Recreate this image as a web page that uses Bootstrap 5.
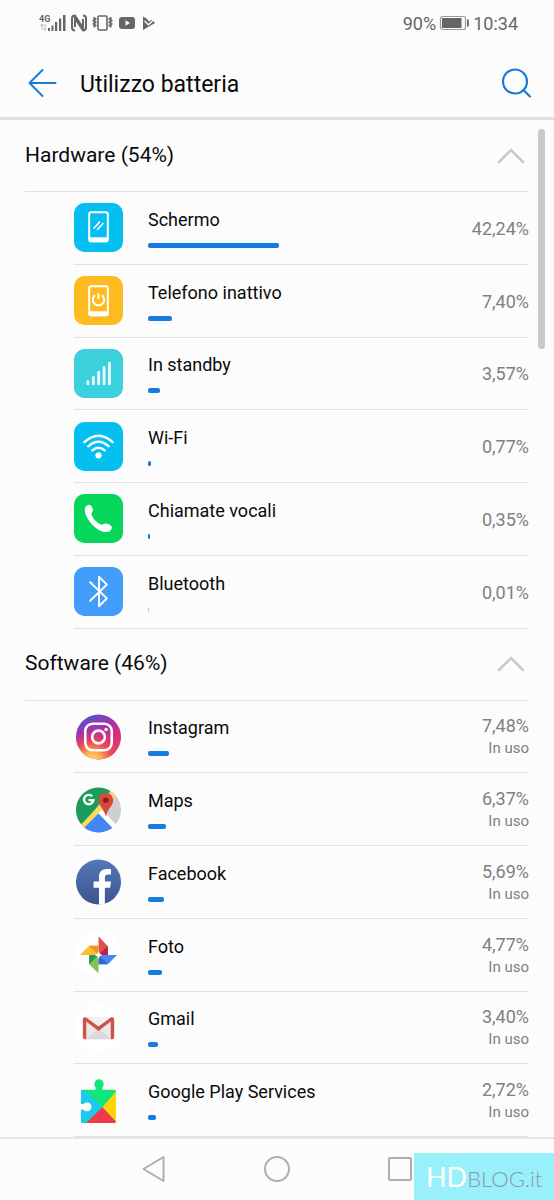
<!DOCTYPE html>
<html lang="it">
<head>
<meta charset="utf-8">
<meta name="viewport" content="width=device-width, initial-scale=1">
<title>Utilizzo batteria</title>
<link href="https://cdn.jsdelivr.net/npm/bootstrap@5.3.0/dist/css/bootstrap.min.css" rel="stylesheet">
<style>
  body { font-family: Roboto, "Liberation Sans", sans-serif; background: #fcfcfc; color: #0a0a0a; }
  svg { display: block; flex: none; }
  button { background: none; border: 0; padding: 0; color: inherit; }
  .screen { min-height: 100vh; }
  .status { height: 46px; padding: 0 36px 0 39px; color: #666; font-size: 18px; }
  .status-power { gap: 3px; }
  .titlebar { height: 74px; padding: 2px 22px 0 26px; border-bottom: 3px solid #dfdfdf; }
  .titlebar h1 { font-size: 23px; line-height: 28px; font-weight: 400; margin-left: 22px; }
  .usage { padding: 0 25px; }
  .group-head { height: 72px; font-size: 21px; border-bottom: 1px solid #e2e2e2; }
  .group-list { margin-left: 49px; }
  .app-row { min-height: 72px; border-bottom: 1px solid #e2e2e2; }
  .app-icon { width: 49px; margin-right: 25px; }
  .app-name { font-size: 18px; line-height: 24px; margin-bottom: 11px; }
  .meter { height: 5px; background: none; border-radius: 0; }
  .meter .progress-bar { background: #147be0; border-radius: 2px; }
  .meter .idle { background: #ccc; }
  .amount { color: #808080; font-size: 18px; line-height: 22px; padding-top: 2px; }
  .amount span { font-size: 15px; }
  .scroll-thumb { right: 9px; top: 9px; width: 7px; height: 220px; border-radius: 4px; background: #c9c9c9; }
  .softkeys { height: 63px; border-top: 2px solid #e6e6e6; padding: 0 142px 2px; }
  .watermark { right: 0; bottom: 0; width: 140px; height: 47px; padding-left: 12px; background: #98f0fb; color: #8b9ba3; font-family: Lato, sans-serif; font-weight: 300; font-size: 22px; line-height: 47px; }
  .watermark b { font-weight: 400; font-size: 27px; color: #fff; }
</style>
</head>
<body>
<div class="screen d-flex flex-column position-relative">
  <div class="status d-flex align-items-center justify-content-between">
    <svg width="118" height="18" viewBox="0 0 118 18" fill="#666" role="img" aria-label="4G, NFC, vibrazione">
      <text x="0" y="8" font-size="9" font-weight="700" font-family="Roboto, sans-serif">4G</text>
      <path d="M3 10v6M1.500 12l1.500-2 1.500 2M6 10v6M4.800 14.500l1.200 2 1.200-2" stroke="#bbb" fill="none"/>
      <path d="M9 14h2v3H9zM12.500 11.500h2V17h-2zM16 8h2.200v9H16zM20 4.500h2.200V17H20zM24 1h2.500v16H24z"/>
      <g fill="none" stroke="#666" stroke-width="2"><path d="M36 16.500q-3 0-3-3v-9q0-3 3-3l8 12.500V5M44 1.500q3 0 3 3v9q0 3-3 3L36 4.500V13"/></g>
      <rect x="59" y="2" width="9" height="14" rx="1" fill="none" stroke="#666" stroke-width="1.600"/>
      <path d="M54.500 3.500l2 1.600-2 1.600 2 1.600-2 1.600 2 1.600-2 1.600M72.500 3.500l-2 1.600 2 1.600-2 1.600 2 1.600-2 1.600 2 1.600" fill="none" stroke="#666" stroke-width="1.900"/>
      <rect x="80" y="3" width="16" height="12" rx="3"/><path d="M86.500 6.200v5.600l4.500-2.800z" fill="#fcfcfc"/>
      <path d="M104 2.500l3.500 2 2.500 3 3-1.800 3 3.300-12 7z"/><path d="M105.500 7l4 3.800 6-5.800" fill="none" stroke="#fcfcfc" stroke-width="1.300"/>
    </svg>
    <div class="status-power d-flex align-items-center">
      <span>90%</span>
      <svg width="31" height="16" viewBox="0 0 31 16"><rect x="1.500" y="1.500" width="25" height="13" rx="2" fill="none" stroke="#999" stroke-width="1.200"/><path d="M3 3h19.500v10H3zM28 4.500h1.800v7H28z" fill="#666"/></svg>
      <span>10:34</span>
    </div>
  </div>

  <header class="titlebar d-flex align-items-center">
    <button type="button" aria-label="Indietro"><svg width="32" height="32" viewBox="0 0 32 32" fill="none" stroke="#197bd8" stroke-width="2" stroke-linecap="round" stroke-linejoin="round"><path d="M29.500 16H3.500M16.500 3L3.500 16l13 13"/></svg></button>
    <h1 class="mb-0 pt-1 flex-fill">Utilizzo batteria</h1>
    <button type="button" aria-label="Cerca"><svg width="32" height="32" viewBox="0 0 32 32" fill="none" stroke="#197bd8" stroke-width="2.200" stroke-linecap="round"><circle cx="15" cy="14.500" r="12"/><path d="M23.500 23l6.500 6.500"/></svg></button>
  </header>

  <main class="usage d-flex flex-column flex-fill position-relative">
    <section class="d-flex flex-column flex-fill">
      <button type="button" class="group-head d-flex align-items-center justify-content-between" aria-expanded="true">
        <span>Hardware (54%)</span>
        <svg width="36" height="20" viewBox="0 0 36 20" fill="none" stroke="#c9c9c9" stroke-width="2.600" stroke-linecap="round"><path d="M6 16L18 4 30 16"/></svg>
      </button>
      <ul class="group-list list-unstyled mb-0 d-flex flex-column flex-fill">
        <li class="app-row d-flex flex-fill align-items-center">
          <svg class="app-icon" height="49" viewBox="0 0 50 50"><rect width="50" height="50" rx="11" fill="#05bff0"/><rect x="15.500" y="9.500" width="19" height="29.500" rx="2" fill="none" stroke="#fff" stroke-width="2"/><path d="M15 35h20v3.500q0 1.500-1.500 1.500h-17q-1.500 0-1.500-1.500z" fill="#fff"/><path d="M20 26l6.500-7M23.500 27.500l6.500-7" stroke="#fff" stroke-width="1.600"/></svg>
          <div class="flex-fill"><div class="app-name">Schermo</div><div class="meter progress"><div class="progress-bar" style="width:131px"></div></div></div>
          <div class="amount text-end">42,24%</div>
        </li>
        <li class="app-row d-flex flex-fill align-items-center">
          <svg class="app-icon" height="49" viewBox="0 0 50 50"><rect width="50" height="50" rx="11" fill="#fdbb1f"/><rect x="15.500" y="10.500" width="19" height="29.500" rx="2" fill="none" stroke="#fff" stroke-width="2"/><path d="M15 36h20v3.500q0 1.500-1.500 1.500h-17q-1.500 0-1.500-1.500z" fill="#fff"/><path d="M21.500 19.500a5.800 5.800 0 1 0 7 0M25 17.500v6" fill="none" stroke="#fff" stroke-width="2"/></svg>
          <div class="flex-fill"><div class="app-name">Telefono inattivo</div><div class="meter progress"><div class="progress-bar" style="width:24px"></div></div></div>
          <div class="amount text-end">7,40%</div>
        </li>
        <li class="app-row d-flex flex-fill align-items-center">
          <svg class="app-icon" height="49" viewBox="0 0 50 50"><rect width="50" height="50" rx="11" fill="#3bd0dc"/><path d="M14.200 33.500v2M19.700 29v6.500M25.200 24v11.500M30.700 19v16.500M36.200 14.500v21" stroke="#e8ffff" stroke-width="3" stroke-linecap="round"/></svg>
          <div class="flex-fill"><div class="app-name">In standby</div><div class="meter progress"><div class="progress-bar" style="width:12px"></div></div></div>
          <div class="amount text-end">3,57%</div>
        </li>
        <li class="app-row d-flex flex-fill align-items-center">
          <svg class="app-icon" height="49" viewBox="0 0 50 50"><rect width="50" height="50" rx="11" fill="#05bff0"/><g fill="none" stroke="#fff" stroke-width="2.400" stroke-linecap="round"><path d="M10.500 20.500q14.500-13 29 0M14.500 24.800q10.500-9.500 21 0M18.700 29q6.300-5.500 12.600 0"/></g><circle cx="25" cy="34" r="3.200" fill="#fff"/></svg>
          <div class="flex-fill"><div class="app-name">Wi-Fi</div><div class="meter progress"><div class="progress-bar" style="width:3px"></div></div></div>
          <div class="amount text-end">0,77%</div>
        </li>
        <li class="app-row d-flex flex-fill align-items-center">
          <svg class="app-icon" height="49" viewBox="0 0 50 50"><rect width="50" height="50" rx="11" fill="#06d65a"/><path d="M11.500 13.500c1-1.800 3.500-3 5-2.300 1.800 1 3 4 2.800 6-.2 1.500-1.700 2-1.400 3.400.8 4.200 6 9.200 10.100 10.600 1.500.5 2.300-1 3.800-1 2.500 0 6.200 1.500 6.800 3.400.4 1.600-1.200 4.300-3.400 5-3 .9-8-.4-12.500-3.700-4-3-8.200-8-10.200-12.500-1.500-3.500-2-7-1-8.900z" fill="#fff"/></svg>
          <div class="flex-fill"><div class="app-name">Chiamate vocali</div><div class="meter progress"><div class="progress-bar" style="width:2px"></div></div></div>
          <div class="amount text-end">0,35%</div>
        </li>
        <li class="app-row d-flex flex-fill align-items-center">
          <svg class="app-icon" height="49" viewBox="0 0 50 50"><rect width="50" height="50" rx="11" fill="#419cfb"/><path d="M16.500 15.500L33.500 32l-8 8V10l8 8-17 16.500" fill="none" stroke="#fff" stroke-width="2" stroke-linecap="round" stroke-linejoin="round"/></svg>
          <div class="flex-fill"><div class="app-name">Bluetooth</div><div class="meter progress"><div class="progress-bar idle" style="width:1px"></div></div></div>
          <div class="amount text-end">0,01%</div>
        </li>
      </ul>
    </section>

    <section class="d-flex flex-column flex-fill">
      <button type="button" class="group-head d-flex align-items-center justify-content-between" aria-expanded="true">
        <span>Software (46%)</span>
        <svg width="36" height="20" viewBox="0 0 36 20" fill="none" stroke="#c9c9c9" stroke-width="2.600" stroke-linecap="round"><path d="M6 16L18 4 30 16"/></svg>
      </button>
      <ul class="group-list list-unstyled mb-0 d-flex flex-column flex-fill">
        <li class="app-row d-flex flex-fill align-items-center">
          <svg class="app-icon" height="49" viewBox="0 0 50 50"><defs><linearGradient id="igBase" x1=".2" y1="0" x2=".7" y2="1"><stop offset="0" stop-color="#4a57cf"/><stop offset=".35" stop-color="#a432ad"/><stop offset=".65" stop-color="#d92e7f"/><stop offset="1" stop-color="#e8455a"/></linearGradient><radialGradient id="igWarm" cx=".35" cy="1.050" r=".75"><stop offset="0" stop-color="#ffe08a"/><stop offset=".3" stop-color="#fbac4c"/><stop offset=".6" stop-color="#ee5048" stop-opacity=".8"/><stop offset="1" stop-color="#d92e7f" stop-opacity="0"/></radialGradient></defs><circle cx="25" cy="25.500" r="23" fill="url(#igBase)"/><circle cx="25" cy="25.500" r="23" fill="url(#igWarm)"/><rect x="11.500" y="12" width="27" height="27" rx="7.500" fill="none" stroke="#fff" stroke-width="2.600"/><circle cx="25" cy="25.500" r="6.500" fill="none" stroke="#fff" stroke-width="2.600"/><circle cx="32.700" cy="17.800" r="1.800" fill="#fff"/></svg>
          <div class="flex-fill"><div class="app-name">Instagram</div><div class="meter progress"><div class="progress-bar" style="width:21px"></div></div></div>
          <div class="amount text-end">7,48%<span class="d-block">In uso</span></div>
        </li>
        <li class="app-row d-flex flex-fill align-items-center">
          <svg class="app-icon" height="49" viewBox="0 0 50 50"><defs><clipPath id="mapDisc"><circle cx="25" cy="25.500" r="23"/></clipPath></defs><g clip-path="url(#mapDisc)"><path d="M0 0h50v50H0z" fill="#cfcfcf"/><path d="M0 0h42L5 45H0z" fill="#1a9c5b"/><path d="M24.500 25L50 51" stroke="#fff" stroke-width="5"/><path d="M6 45L42 7" stroke="#fbdc4e" stroke-width="4.500"/><path d="M25 29L5 49h39z" fill="#4285f4"/></g><path d="M18.500 11.500a4.800 4.800 0 1 0 1.300 4h-5" fill="none" stroke="#fff" stroke-width="2.400"/><path d="M32.500 8a7.500 7.500 0 0 1 7.500 7.500c0 6-5.500 7.500-7.500 17-2-9.500-7.500-11-7.500-17A7.500 7.500 0 0 1 32.500 8z" fill="#dc473a"/><circle cx="32.500" cy="15.500" r="2.800" fill="#7b231c"/></svg>
          <div class="flex-fill"><div class="app-name">Maps</div><div class="meter progress"><div class="progress-bar" style="width:18px"></div></div></div>
          <div class="amount text-end">6,37%<span class="d-block">In uso</span></div>
        </li>
        <li class="app-row d-flex flex-fill align-items-center">
          <svg class="app-icon" height="49" viewBox="0 0 50 50"><defs><linearGradient id="fbBlue" x2="0" y2="1"><stop stop-color="#5478b8"/><stop offset="1" stop-color="#3b5490"/></linearGradient></defs><circle cx="25" cy="25.500" r="23" fill="url(#fbBlue)"/><path d="M25.500 48.500V31.500H20V25h5.500v-4.500c0-5.500 3-8.300 8-8.300 2.300 0 4.300.2 4.300.2v5.400h-3c-2.500 0-3.300 1.500-3.300 3.200v4h6.300l-1 6.500h-5.300v16q-3 1.200-6 1z" fill="#fff"/></svg>
          <div class="flex-fill"><div class="app-name">Facebook</div><div class="meter progress"><div class="progress-bar" style="width:16px"></div></div></div>
          <div class="amount text-end">5,69%<span class="d-block">In uso</span></div>
        </li>
        <li class="app-row d-flex flex-fill align-items-center">
          <svg class="app-icon" height="49" viewBox="0 0 50 50"><circle cx="25" cy="25.500" r="23" fill="#fff"/><g transform="translate(.5 0)"><path d="M24.500 6.500l9.500 10V25.500h-9.500z" fill="#e2504a"/><path d="M34 16.500v9h-9.500z" fill="#b5224f"/><path d="M43.500 25.500L34 35H24.500v-9.500z" fill="#4b86f0"/><path d="M34 35h-9.500v-9.500z" fill="#3466cf"/><path d="M24.500 44.500L15 35v-9.500h9.500z" fill="#86c250"/><path d="M15 35v-9.500h9.500z" fill="#1e9c5c"/><path d="M5.500 25.500L15 16h9.500v9.500z" fill="#fcc02c"/><path d="M15 16h9.500v9.500z" fill="#f59225"/><path d="M24.500 21.500l1.200 2.800 2.800 1.200-2.800 1.200-1.200 2.800-1.200-2.800-2.800-1.200 2.800-1.200z" fill="#fff"/></g></svg>
          <div class="flex-fill"><div class="app-name">Foto</div><div class="meter progress"><div class="progress-bar" style="width:14px"></div></div></div>
          <div class="amount text-end">4,77%<span class="d-block">In uso</span></div>
        </li>
        <li class="app-row d-flex flex-fill align-items-center">
          <svg class="app-icon" height="49" viewBox="0 0 50 50"><circle cx="25" cy="25.500" r="23" fill="#fff"/><rect x="10" y="14.500" width="30" height="22.500" rx="2" fill="#e9e9e9"/><path d="M12 37l13-11 13 11z" fill="#dadada"/><path d="M12 15h26L25 25z" fill="#f1f1f1"/><path d="M9 16.500q0-2 2-2h1L25 24l13-9.500h1q2 0 2 2V35q0 2-2 2h-1.500V19L25 28.500 12.500 19v18H11q-2 0-2-2z" fill="#d0504a"/></svg>
          <div class="flex-fill"><div class="app-name">Gmail</div><div class="meter progress"><div class="progress-bar" style="width:10px"></div></div></div>
          <div class="amount text-end">3,40%<span class="d-block">In uso</span></div>
        </li>
        <li class="app-row d-flex flex-fill align-items-center">
          <svg class="app-icon" height="49" viewBox="0 0 50 50"><defs><clipPath id="puzzle"><path d="M9 14h13v-2.500a4.800 4.800 0 1 1 7 0V14h12q2 0 2 2v30q0 2-2 2H9q-2 0-2-2V34.500h2.500a4.800 4.800 0 1 0 0-6H7V16q0-2 2-2z"/></clipPath></defs><g clip-path="url(#puzzle)"><path d="M0 0h50v50H0z" fill="#10e67a"/><path d="M0 6l29 26L8 50H0z" fill="#1cc8f5"/><path d="M46 12v38L29 32z" fill="#ffd40a"/><path d="M10 50l19-18 17 18z" fill="#f03a4b"/></g></svg>
          <div class="flex-fill"><div class="app-name">Google Play Services</div><div class="meter progress"><div class="progress-bar" style="width:8px"></div></div></div>
          <div class="amount text-end">2,72%<span class="d-block">In uso</span></div>
        </li>
      </ul>
    </section>
    <div class="scroll-thumb position-absolute"></div>
  </main>

  <nav class="softkeys d-flex align-items-center justify-content-between" aria-label="Navigazione">
    <button type="button" aria-label="Indietro"><svg width="24" height="28" viewBox="0 0 24 28" fill="none" stroke="#aeaeae" stroke-width="2" stroke-linejoin="round"><path d="M21.500 2v24L1.500 14z"/></svg></button>
    <button type="button" aria-label="Home"><svg width="28" height="28" viewBox="0 0 28 28" fill="none" stroke="#aeaeae" stroke-width="2"><circle cx="14" cy="14" r="12"/></svg></button>
    <button type="button" aria-label="Recenti"><svg width="24" height="28" viewBox="0 0 24 28" fill="none" stroke="#aeaeae" stroke-width="2"><rect x="1" y="3" width="22" height="22" rx="1"/></svg></button>
  </nav>
  <div class="watermark position-absolute text-nowrap"><b>HD</b>BLOG.it</div>
</div>
<script src="https://cdn.jsdelivr.net/npm/bootstrap@5.3.0/dist/js/bootstrap.bundle.min.js"></script>
</body>
</html>
